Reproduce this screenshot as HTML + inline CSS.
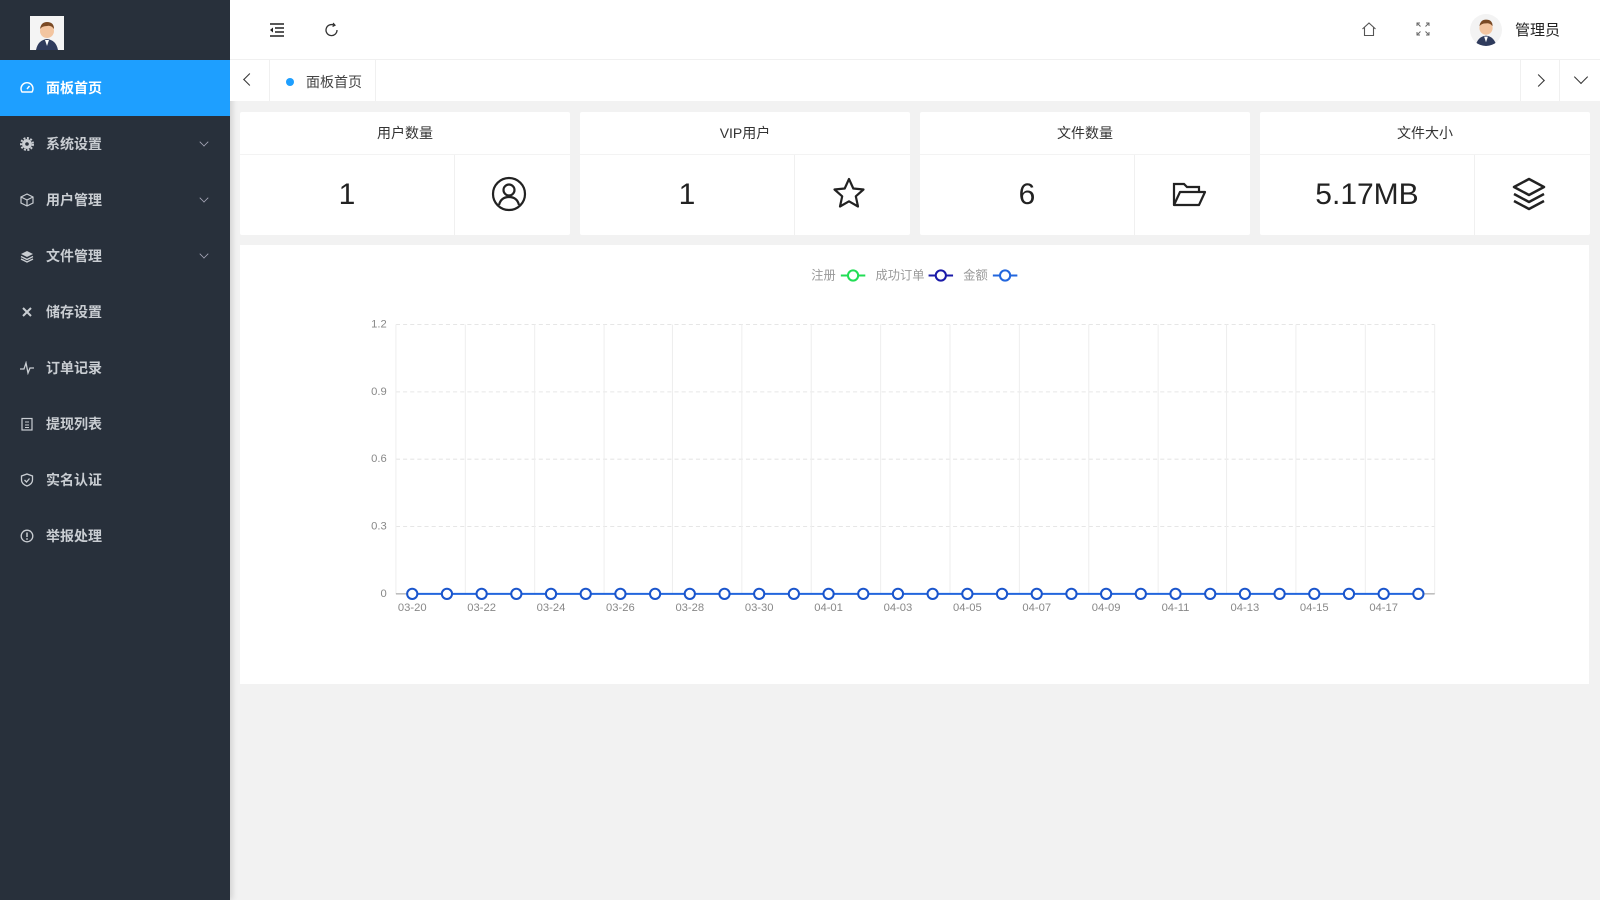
<!DOCTYPE html>
<html><head><meta charset="utf-8"><style>
*{margin:0;padding:0;box-sizing:border-box}
body{width:1600px;height:900px;background:#f2f2f2;font-family:"Liberation Sans","Noto Sans CJK SC",sans-serif;position:relative;overflow:hidden}
.side{position:absolute;left:0;top:0;width:230px;height:900px;background:#28303b;box-shadow:2px 0 6px rgba(0,0,0,.15)}
.logo{position:absolute;left:30px;top:16px;width:34px;height:34px;background:#f4f4f4}
.mi{position:absolute;left:0;width:230px;height:56px;color:#c9cdd2;font-size:14px;font-weight:bold;line-height:56px;padding-left:46px}
.mi.act{background:#1e9fff;color:#fff}
.mi .ic{position:absolute;left:20px;top:21px;width:14px;height:14px}
.mi .ar{position:absolute;right:22px;top:22px;width:8px;height:8px;border-right:1.5px solid #aab;border-bottom:1.5px solid #aab;transform:rotate(45deg) scale(.8)}
.top{position:absolute;left:230px;top:0;right:0;height:60px;background:#fff;border-bottom:1px solid #f0f0f0}
.tabs{position:absolute;left:230px;top:60px;right:0;height:41px;background:#fff}
.card{position:absolute;top:112px;width:330px;height:123px;background:#fff;border-radius:2px}
.card .h{height:43px;border-bottom:1px solid #f3f3f3;text-align:center;line-height:43px;font-size:14px;color:#333}
.card .v{position:absolute;left:0;top:43px;width:215px;height:80px;text-align:center;line-height:80px;font-size:30px;color:#222;border-right:1px solid #f0f0f0}
.panel{position:absolute;left:240px;top:245px;width:1349px;height:439px;background:#fff}
</style></head><body>
<div class="side">
 <div class="logo"><svg width="34" height="34" viewBox="0 0 34 34"><path d="M6 34 Q8 24 17 23 Q26 24 28 34Z" fill="#2f3b5c"/><path d="M15 24 L17 30 L19 24Z" fill="#fff"/><circle cx="17" cy="15" r="7" fill="#f3c5a0"/><path d="M10 13 Q11 6 17 6 Q24 6 24 13 Q21 9 17 10 Q12 10 10 13Z" fill="#7a4a25"/></svg></div>
 <div class="mi act" style="top:60px"><svg class="ic" viewBox="0 0 14 14"><path d="M2 11 A6 6 0 1 1 12 11Z" fill="none" stroke="#fff" stroke-width="1.4"/><path d="M7 8 L9.5 5" stroke="#fff" stroke-width="1.4"/></svg>面板首页</div>
 <div class="mi" style="top:116px"><svg class="ic" viewBox="0 0 14 14"><circle cx="7" cy="7" r="5" fill="#c9cdd2"/><circle cx="7" cy="7" r="6" fill="none" stroke="#c9cdd2" stroke-width="2" stroke-dasharray="2 1.5"/><circle cx="7" cy="7" r="1.8" fill="#28303b"/></svg>系统设置<span class="ar"></span></div>
 <div class="mi" style="top:172px"><svg class="ic" viewBox="0 0 14 14"><path d="M7 1 L13 4 V10 L7 13 L1 10 V4Z M1 4 L7 7 L13 4 M7 7 V13" fill="none" stroke="#c9cdd2" stroke-width="1.2"/></svg>用户管理<span class="ar"></span></div>
 <div class="mi" style="top:228px"><svg class="ic" viewBox="0 0 14 14"><path d="M7 2 L13 5 L7 8 L1 5Z" fill="#c9cdd2"/><path d="M1 7.5 L7 10.5 L13 7.5 M1 10 L7 13 L13 10" fill="none" stroke="#c9cdd2" stroke-width="1.3"/></svg>文件管理<span class="ar"></span></div>
 <div class="mi" style="top:284px"><svg class="ic" viewBox="0 0 14 14"><path d="M3 3 L11 11 M11 3 L3 11" stroke="#c9cdd2" stroke-width="2"/></svg>储存设置</div>
 <div class="mi" style="top:340px"><svg class="ic" viewBox="0 0 14 14"><path d="M0 8 H4 L6 2 L8 12 L10 7 H14" fill="none" stroke="#c9cdd2" stroke-width="1.3"/></svg>订单记录</div>
 <div class="mi" style="top:396px"><svg class="ic" viewBox="0 0 14 14"><rect x="2" y="1.5" width="10" height="11.5" fill="none" stroke="#c9cdd2" stroke-width="1.2"/><path d="M5 5H9M5 8H9M5 10.5H9" stroke="#c9cdd2"/></svg>提现列表</div>
 <div class="mi" style="top:452px"><svg class="ic" viewBox="0 0 14 14"><path d="M7 1 L12.5 3 V7 Q12.5 11 7 13 Q1.5 11 1.5 7 V3Z" fill="none" stroke="#c9cdd2" stroke-width="1.3"/><path d="M4.5 7 L6.5 9 L9.5 5.5" fill="none" stroke="#c9cdd2" stroke-width="1.3"/></svg>实名认证</div>
 <div class="mi" style="top:508px"><svg class="ic" viewBox="0 0 14 14"><circle cx="7" cy="7" r="5.8" fill="none" stroke="#c9cdd2" stroke-width="1.3"/><path d="M7 3.5V8" stroke="#c9cdd2" stroke-width="1.5"/><circle cx="7" cy="10" r=".9" fill="#c9cdd2"/></svg>举报处理</div>
</div>
<div class="top">
 <svg style="position:absolute;left:39px;top:22px" width="16" height="16" viewBox="0 0 16 16"><path d="M1 2H15M6 6H15M6 10H15M1 14H15" stroke="#222" stroke-width="1.5"/><path d="M4 5.5 L1 8 L4 10.5Z" fill="#222"/></svg>
 <svg style="position:absolute;left:94px;top:22px" width="16" height="16" viewBox="0 0 16 16"><path d="M13 8 A5.5 5.5 0 1 1 10 3.2" fill="none" stroke="#333" stroke-width="1.3"/><path d="M9 1 L11 3.2 L8.6 4.5" fill="none" stroke="#333" stroke-width="1.2"/></svg>
 <svg style="position:absolute;left:1131px;top:21px" width="16" height="16" viewBox="0 0 16 16"><path d="M1.5 8 L8 2 L14.5 8 M3.5 6.5V14.5H12.5V6.5" fill="none" stroke="#555" stroke-width="1.1"/></svg>
 <svg style="position:absolute;left:1186px;top:22px" width="14" height="14" viewBox="0 0 14 14"><path d="M1 4V1H4M10 1H13V4M13 10V13H10M4 13H1V10M1 1L4.5 4.5M13 1L9.5 4.5M13 13L9.5 9.5M1 13L4.5 9.5" fill="none" stroke="#666" stroke-width="1"/></svg>
 <div style="position:absolute;left:1240px;top:14px;width:32px;height:32px;border-radius:50%;background:#f3f3f3;overflow:hidden"><svg width="32" height="32" viewBox="0 0 34 34"><path d="M6 34 Q8 24 17 23 Q26 24 28 34Z" fill="#2f3b5c"/><path d="M15 24 L17 30 L19 24Z" fill="#fff"/><circle cx="17" cy="15" r="7" fill="#f3c5a0"/><path d="M10 13 Q11 6 17 6 Q24 6 24 13 Q21 9 17 10 Q12 10 10 13Z" fill="#7a4a25"/></svg></div>
 <div style="position:absolute;left:1285px;top:19px;font-size:15px;color:#222">管理员</div>
</div>
<div class="tabs">
 <div style="position:absolute;left:0;top:0;width:40px;height:41px;border-right:1px solid #f0f0f0"></div>
 <div style="position:absolute;left:15px;top:15px;width:9px;height:9px;border-left:1.5px solid #333;border-bottom:1.5px solid #333;transform:rotate(45deg)"></div>
 <div style="position:absolute;left:41px;top:0;width:105px;height:41px;border-right:1px solid #f0f0f0"></div>
 <div style="position:absolute;left:56px;top:18px;width:8px;height:8px;border-radius:50%;background:#1e9fff"></div>
 <div style="position:absolute;left:76px;top:12px;font-size:14px;color:#444">面板首页</div>
 <div style="position:absolute;right:40px;top:0;width:40px;height:41px;border-left:1px solid #f0f0f0;border-right:1px solid #f0f0f0"></div>
 <div style="position:absolute;right:57px;top:16px;width:9px;height:9px;border-right:1.5px solid #333;border-top:1.5px solid #333;transform:rotate(45deg)"></div>
 <div style="position:absolute;right:14px;top:12px;width:10px;height:10px;border-right:1.5px solid #333;border-bottom:1.5px solid #333;transform:rotate(45deg)"></div>
</div>

<div class="card" style="left:240px"><div class="h">用户数量</div><div class="v">1</div></div>
<div class="card" style="left:580px"><div class="h">VIP用户</div><div class="v">1</div></div>
<div class="card" style="left:920px"><div class="h">文件数量</div><div class="v">6</div></div>
<div class="card" style="left:1260px"><div class="h">文件大小</div><div class="v">5.17MB</div></div>
<svg style="position:absolute;left:491px;top:176px" width="36" height="36" viewBox="0 0 36 36"><circle cx="18" cy="18" r="16" fill="none" stroke="#222" stroke-width="2.2"/><circle cx="18" cy="14" r="5.5" fill="none" stroke="#222" stroke-width="2.2"/><path d="M8 29 Q10 21 18 21 Q26 21 28 29" fill="none" stroke="#222" stroke-width="2.2"/></svg>
<svg style="position:absolute;left:831px;top:176px" width="36" height="36" viewBox="0 0 36 36"><path d="M18 3 L22.3 12.5 L32.5 13.5 L24.8 20.3 L27 30.5 L18 25.3 L9 30.5 L11.2 20.3 L3.5 13.5 L13.7 12.5Z" fill="none" stroke="#222" stroke-width="2.2" stroke-linejoin="round"/></svg>
<svg style="position:absolute;left:1171px;top:176px" width="36" height="36" viewBox="0 0 36 36"><path d="M3 29 V8 H13 L16 11 H28 V16" fill="none" stroke="#222" stroke-width="2.2"/><path d="M3 29 L9 16 H34 L28 29Z" fill="none" stroke="#222" stroke-width="2.2" stroke-linejoin="round"/></svg>
<svg style="position:absolute;left:1511px;top:176px" width="36" height="36" viewBox="0 0 36 36"><path d="M18 3 L33 11 L18 19 L3 11Z" fill="none" stroke="#222" stroke-width="2.5" stroke-linejoin="round"/><path d="M3 18 L18 26 L33 18 M3 25 L18 33 L33 25" fill="none" stroke="#222" stroke-width="2.5" stroke-linejoin="round"/></svg>

<div class="panel"></div>
<svg style="position:absolute;left:0;top:0" width="1600" height="900" viewBox="0 0 1568 882">
<g font-family="Liberation Sans, Noto Sans CJK SC, sans-serif" font-size="12" fill="#999">
<text x="795" y="274">注册</text><text x="858" y="274">成功订单</text><text x="944" y="274">金额</text>
</g>
<g fill="#fff" stroke-width="2"><path d="M824 270H848" stroke="#22dd55"/><circle cx="836" cy="270" r="5" stroke="#22dd55"/><path d="M910 270H934" stroke="#1a1aa8"/><circle cx="922" cy="270" r="5" stroke="#1a1aa8"/><path d="M973 270H997" stroke="#2266dd"/><circle cx="985" cy="270" r="5" stroke="#2266dd"/></g>
<g stroke="#e6e6e6" stroke-dasharray="4 3"><path d="M388 318H1406M388 384H1406M388 450H1406M388 516H1406"/></g>
<g stroke="#eee"><path d="M388 318V582M456 318V582M524 318V582M592 318V582M659 318V582M727 318V582M795 318V582M863 318V582M931 318V582M999 318V582M1067 318V582M1135 318V582M1202 318V582M1270 318V582M1338 318V582M1406 318V582"/></g>
<path d="M388 582H1406" stroke="#999"/>
<g font-family="Liberation Sans, sans-serif" font-size="11" fill="#888" text-anchor="end"><text x="379" y="321">1.2</text><text x="379" y="387">0.9</text><text x="379" y="453">0.6</text><text x="379" y="519">0.3</text><text x="379" y="585">0</text></g>
<g font-family="Liberation Sans, sans-serif" font-size="11" fill="#888" text-anchor="middle"><text x="404" y="599">03-20</text><text x="472" y="599">03-22</text><text x="540" y="599">03-24</text><text x="608" y="599">03-26</text><text x="676" y="599">03-28</text><text x="744" y="599">03-30</text><text x="812" y="599">04-01</text><text x="880" y="599">04-03</text><text x="948" y="599">04-05</text><text x="1016" y="599">04-07</text><text x="1084" y="599">04-09</text><text x="1152" y="599">04-11</text><text x="1220" y="599">04-13</text><text x="1288" y="599">04-15</text><text x="1356" y="599">04-17</text></g>
<path d="M404 582H1390" stroke="#2266dd" stroke-width="2"/>
<g fill="#fff" stroke="#1a55cc" stroke-width="2"><circle cx="404" cy="582" r="5"/><circle cx="438" cy="582" r="5"/><circle cx="472" cy="582" r="5"/><circle cx="506" cy="582" r="5"/><circle cx="540" cy="582" r="5"/><circle cx="574" cy="582" r="5"/><circle cx="608" cy="582" r="5"/><circle cx="642" cy="582" r="5"/><circle cx="676" cy="582" r="5"/><circle cx="710" cy="582" r="5"/><circle cx="744" cy="582" r="5"/><circle cx="778" cy="582" r="5"/><circle cx="812" cy="582" r="5"/><circle cx="846" cy="582" r="5"/><circle cx="880" cy="582" r="5"/><circle cx="914" cy="582" r="5"/><circle cx="948" cy="582" r="5"/><circle cx="982" cy="582" r="5"/><circle cx="1016" cy="582" r="5"/><circle cx="1050" cy="582" r="5"/><circle cx="1084" cy="582" r="5"/><circle cx="1118" cy="582" r="5"/><circle cx="1152" cy="582" r="5"/><circle cx="1186" cy="582" r="5"/><circle cx="1220" cy="582" r="5"/><circle cx="1254" cy="582" r="5"/><circle cx="1288" cy="582" r="5"/><circle cx="1322" cy="582" r="5"/><circle cx="1356" cy="582" r="5"/><circle cx="1390" cy="582" r="5"/></g>
</svg>
</body></html>
